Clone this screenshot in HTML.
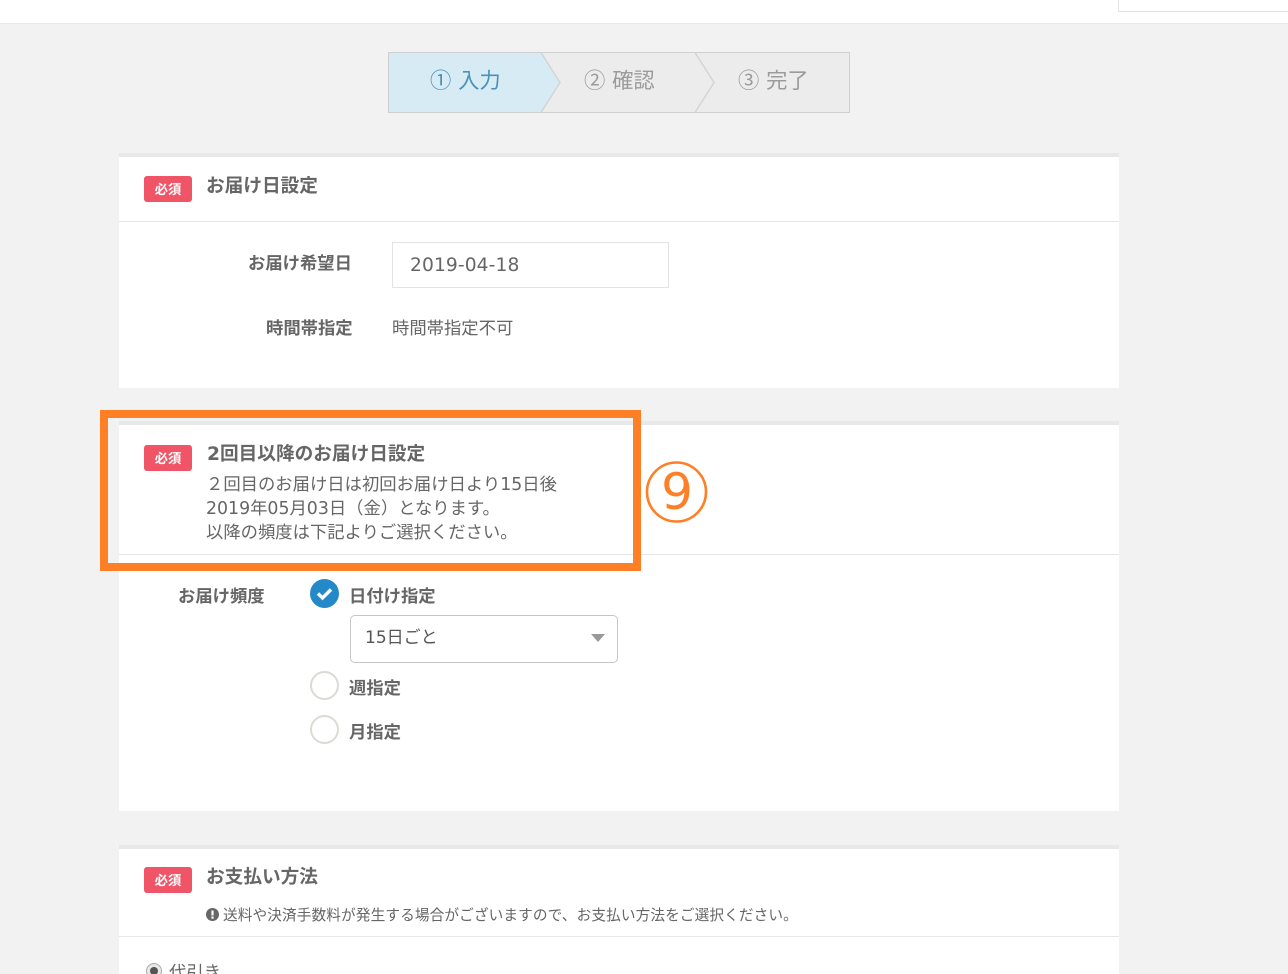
<!DOCTYPE html>
<html lang="ja">
<head>
<meta charset="utf-8">
<title>お届け日設定</title>
<style>
html,body{margin:0;padding:0;width:1288px;height:974px;overflow:hidden}
#p{width:1288px;height:974px;position:relative;overflow:hidden;background:#f2f2f2;font-family:"DejaVu Sans","Noto Sans CJK JP","Liberation Sans",sans-serif;color:#666}
.a{position:absolute;white-space:nowrap}
.card{position:absolute;left:119px;width:1000px;background:#fff;border-top:4px solid #e6e8ea;box-sizing:border-box}
.hr{position:absolute;left:119px;width:1000px;height:1px;background:#e6e6e6}
.badge{position:absolute;left:144px;width:48px;height:26px;background:#ef5467;border-radius:3px;color:#fff;font-size:13.33px;font-weight:700;line-height:30px;text-align:center}
.h{position:absolute;font-size:18.67px;font-weight:700;line-height:26px;color:#666;white-space:nowrap}
.l{position:absolute;font-size:17.33px;font-weight:700;line-height:24px;color:#666;white-space:nowrap}
.t{position:absolute;font-size:17.33px;line-height:24px;color:#666;white-space:nowrap}
.s{position:absolute;top:64px;font-family:"Noto Sans CJK JP",sans-serif;font-size:21.33px;line-height:32px;word-spacing:2px;white-space:nowrap}
.radio{position:absolute;left:310px;width:29px;height:29px;box-sizing:border-box;border:2px solid #dcdad4;border-radius:50%;background:#fff}
</style>
</head>
<body>
<div id="p">
<div class="a" style="left:0;top:0;width:1288px;height:24px;box-sizing:border-box;background:#fff;border-bottom:1px solid #e6e6e6"></div>
<div class="a" style="left:1118px;top:0;width:170px;height:12px;box-sizing:border-box;background:#fff;border-left:1px solid #e4e4e4;border-bottom:1px solid #e4e4e4"></div>

<svg class="a" style="left:388px;top:52px" width="462" height="61" viewBox="0 0 462 61">
<rect x="0.5" y="0.5" width="461" height="60" fill="#ececec" stroke="#cfcfcf"/>
<path d="M1 1H153L172 30.5L153 60H1Z" fill="#d7ebf5"/>
<path d="M0.5 0.5H153M0.5 0.5V60.5M0.5 60.5H153" fill="none" stroke="#cfcfcf"/>
<path d="M153 0.5L172 30.5L153 60.5M307 0.5L326 30.5L307 60.5" fill="none" stroke="#d4d4d4" stroke-width="1.5"/>
</svg>
<div class="s" style="left:430px;color:#4b92b8">① 入力</div>
<div class="s" style="left:584px;color:#9b9b9b">② 確認</div>
<div class="s" style="left:738px;color:#9b9b9b">③ 完了</div>

<!-- card 1 -->
<div class="card" style="top:153px;height:235px"></div>
<div class="hr" style="top:221px"></div>
<div class="badge" style="top:176px">必須</div>
<div class="h" style="left:206px;top:174px">お届け日設定</div>
<div class="l" style="left:248px;top:252px">お届け希望日</div>
<div class="a" style="left:392px;top:242px;width:277px;height:46px;box-sizing:border-box;border:1px solid #e3e3e3;background:#fff"></div>
<div class="a" style="left:410px;top:253px;font-size:18.67px;letter-spacing:0.1px;line-height:26px;color:#666">2019-04-18</div>
<div class="l" style="left:266px;top:317px">時間帯指定</div>
<div class="t" style="left:392px;top:317px">時間帯指定不可</div>

<!-- card 2 -->
<div class="card" style="top:421px;height:390px"></div>
<div class="hr" style="top:554px"></div>
<div class="badge" style="top:445px">必須</div>
<div class="h" style="left:207px;top:442px">2回目以降のお届け日設定</div>
<div class="t" style="left:206px;top:473px">２回目のお届け日は初回お届け日より15日後</div>
<div class="t" style="left:206px;top:497px">2019年05月03日（金）となります。</div>
<div class="t" style="left:206px;top:521px">以降の頻度は下記よりご選択ください。</div>

<div class="a" style="left:100px;top:410px;width:541px;height:161px;box-sizing:border-box;border:8px solid #ff7f27"></div>
<svg class="a" style="left:640px;top:455px" width="72" height="72" viewBox="0 0 72 72">
<circle cx="36.5" cy="37" r="29.5" fill="none" stroke="#ff7f27" stroke-width="2.6"/>
</svg>
<div class="a" style="left:655px;top:457px;width:44px;text-align:center;font-size:50px;line-height:70px;color:#ff7f27">9</div>

<div class="l" style="left:178px;top:585px">お届け頻度</div>
<svg class="a" style="left:310px;top:579px" width="29" height="29" viewBox="0 0 29 29">
<circle cx="14.5" cy="14.5" r="14.5" fill="#2389c9"/>
<path d="M8 14.5L12.5 19L21 10.5" fill="none" stroke="#fff" stroke-width="3.4"/>
</svg>
<div class="l" style="left:349px;top:585px">日付け指定</div>
<div class="a" style="left:350px;top:615px;width:268px;height:48px;box-sizing:border-box;border:1px solid #c6c6c6;border-radius:5px;background:#fff"></div>
<div class="a" style="left:365px;top:626px;font-size:17px;line-height:24px;color:#555">15日ごと</div>
<svg class="a" style="left:591px;top:634px" width="14" height="8" viewBox="0 0 14 8"><path d="M0 0H14L7 8Z" fill="#999"/></svg>
<div class="radio" style="top:671px"></div>
<div class="l" style="left:349px;top:677px">週指定</div>
<div class="radio" style="top:715px"></div>
<div class="l" style="left:349px;top:721px">月指定</div>

<!-- card 3 -->
<div class="card" style="top:845px;height:129px"></div>
<div class="hr" style="top:936px"></div>
<div class="badge" style="top:867px">必須</div>
<div class="h" style="left:206px;top:865px">お支払い方法</div>
<svg class="a" style="left:206px;top:908px" width="13" height="13" viewBox="0 0 13 13">
<circle cx="6.5" cy="6.5" r="6.5" fill="#666"/>
<rect x="5.4" y="2.5" width="2.2" height="5" fill="#fff"/>
<rect x="5.4" y="8.5" width="2.2" height="2.2" fill="#fff"/>
</svg>
<div class="a" style="left:223px;top:906px;font-size:14.67px;letter-spacing:0.1px;line-height:20px;color:#666">送料や決済手数料が発生する場合がございますので、お支払い方法をご選択ください。</div>
<svg class="a" style="left:146px;top:963px" width="16" height="16" viewBox="0 0 16 16">
<circle cx="8" cy="8" r="7.5" fill="#e8e8e8" stroke="#aaa"/>
<circle cx="8" cy="8" r="4" fill="#555"/>
</svg>
<div class="a" style="left:169px;top:961px;font-size:17.33px;line-height:24px;color:#666">代引き</div>
</div>
</body>
</html>
